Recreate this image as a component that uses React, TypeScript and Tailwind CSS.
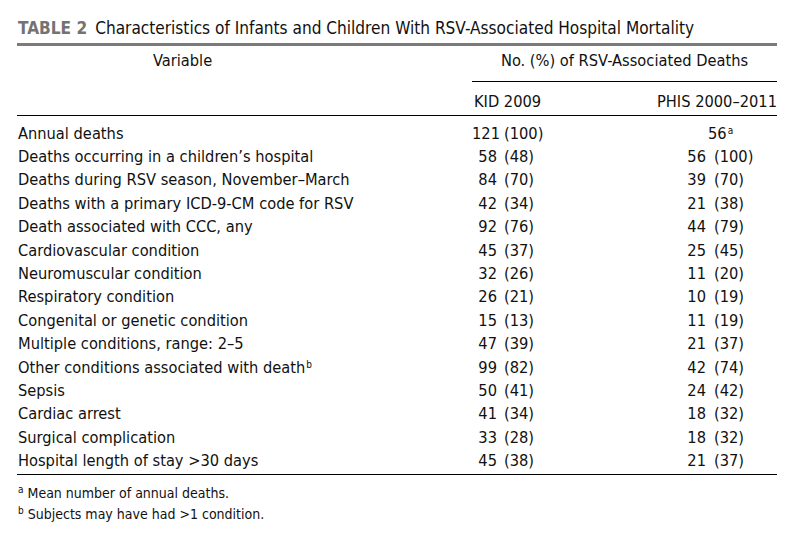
const ROWS: [string, string, string, string, string, string?][] = [
  ["Annual deaths", "121", "(100)", "", ""],
  ["Deaths occurring in a children\u2019s hospital", "58", "(48)", "56", "(100)"],
  ["Deaths during RSV season, November\u2013March", "84", "(70)", "39", "(70)"],
  ["Deaths with a primary ICD-9-CM code for RSV", "42", "(34)", "21", "(38)"],
  ["Death associated with CCC, any", "92", "(76)", "44", "(79)"],
  ["Cardiovascular condition", "45", "(37)", "25", "(45)"],
  ["Neuromuscular condition", "32", "(26)", "11", "(20)"],
  ["Respiratory condition", "26", "(21)", "10", "(19)"],
  ["Congenital or genetic condition", "15", "(13)", "11", "(19)"],
  ["Multiple conditions, range: 2\u20135", "47", "(39)", "21", "(37)"],
  ["Other conditions associated with death", "99", "(82)", "42", "(74)", "b"],
  ["Sepsis", "50", "(41)", "24", "(42)"],
  ["Cardiac arrest", "41", "(34)", "18", "(32)"],
  ["Surgical complication", "33", "(28)", "18", "(32)"],
  ["Hospital length of stay >30 days", "45", "(38)", "21", "(37)"],
];

export default function App() {
  return (
    <div className="h-[534px] w-[790px] overflow-hidden bg-white font-['DejaVu_Sans_Condensed','Liberation_Sans_Narrow','DejaVu_Sans',sans-serif] text-[#111]">
      <div className="pl-[18px] pt-[18px] text-[17.1px] leading-[21px]">
        <span className="font-bold text-[#737373]">TABLE 2</span>
        <span className="ml-[8px]">Characteristics of Infants and Children With RSV-Associated Hospital Mortality</span>
      </div>
      <div className="ml-[17px] mt-[4px] h-[3px] w-[760px] bg-[#7b7b7b]" />

      <div className="ml-[17px] w-[760px] text-[16.3px]">
        {/* header */}
        <div className="flex border-b border-black">
          <div className="w-[455px] pl-[136px] pt-[5px] leading-[20px]">Variable</div>
          <div className="flex-1">
            <div className="border-b border-black pb-[10px] pt-[5px] text-center leading-[20px]">No. (%) of RSV-Associated Deaths</div>
            <div className="flex justify-between pb-[3px] pl-[2px] pt-[10px] leading-[20px]">
              <span>KID 2009</span>
              <span>PHIS 2000&ndash;2011</span>
            </div>
          </div>
        </div>

        {/* body */}
        <div className="border-b border-black pb-[1px] pt-[6px]">
          {ROWS.map(([label, n1, p1, n2, p2, sup]) => (
            <div key={label} className="flex h-[23.4px] items-center leading-[20px]">
              <div className="w-[455px] pl-[1px]">
                {label}
                {sup && <sup className="ml-[1px] text-[10px]">{sup}</sup>}
              </div>
              <div className="flex w-[148px]">
                <span className="w-[25px] text-right">{n1}</span>
                <span className="ml-[7px]">{p1}</span>
              </div>
              {n2 ? (
                <div className="flex">
                  <span className="w-[86px] text-right">{n2}</span>
                  <span className="ml-[8px]">{p2}</span>
                </div>
              ) : (
                <div className="pl-[88px]">
                  56<sup className="ml-[1px] text-[10px]">a</sup>
                </div>
              )}
            </div>
          ))}
        </div>

        {/* footnotes */}
        <div className="pl-[1px] pt-[8px] text-[14px] leading-[21px]">
          <div>
            <sup className="mr-[4px] text-[10px]">a</sup>Mean number of annual deaths.
          </div>
          <div>
            <sup className="mr-[4px] text-[10px]">b</sup>Subjects may have had &gt;1 condition.
          </div>
        </div>
      </div>
    </div>
  );
}
